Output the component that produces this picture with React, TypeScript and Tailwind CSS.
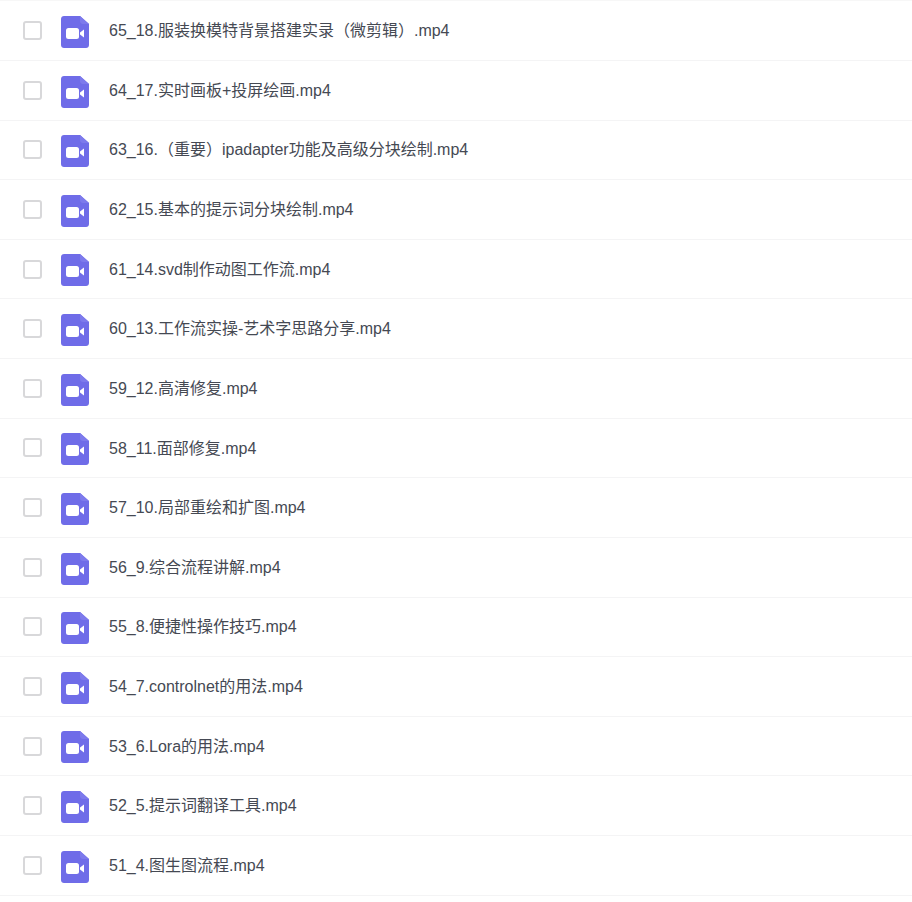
const files = [
  "65_18.服装换模特背景搭建实录（微剪辑）.mp4",
  "64_17.实时画板+投屏绘画.mp4",
  "63_16.（重要）ipadapter功能及高级分块绘制.mp4",
  "62_15.基本的提示词分块绘制.mp4",
  "61_14.svd制作动图工作流.mp4",
  "60_13.工作流实操-艺术字思路分享.mp4",
  "59_12.高清修复.mp4",
  "58_11.面部修复.mp4",
  "57_10.局部重绘和扩图.mp4",
  "56_9.综合流程讲解.mp4",
  "55_8.便捷性操作技巧.mp4",
  "54_7.controlnet的用法.mp4",
  "53_6.Lora的用法.mp4",
  "52_5.提示词翻译工具.mp4",
  "51_4.图生图流程.mp4",
];

function VideoFileIcon() {
  return (
    <svg width="28" height="32" viewBox="0 0 28 32" className="shrink-0">
      <path
        d="M3 0H19L28 8V29C28 30.7 26.7 32 25 32H3C1.3 32 0 30.7 0 29V3C0 1.3 1.3 0 3 0Z"
        fill="#6f6ce8"
      />
      <path d="M19 0L28 8H22C20.3 8 19 6.7 19 5V0Z" fill="#7d7aec" />
      <rect x="5" y="12" width="13" height="11" rx="2.5" fill="#fff" />
      <path d="M19 16.5L23 13.5V21.5L19 18.5Z" fill="#fff" />
    </svg>
  );
}

export default function App() {
  return (
    <div className="h-[902px] w-[912px] overflow-hidden bg-white pt-[0.3px] font-['Liberation_Sans','Noto_Sans_CJK_SC',sans-serif]">
      <div className="h-px bg-[#f7f7f7]" />
      {files.map((name) => (
        <div
          key={name}
          className="flex h-[59.64px] items-center border-b border-[#f4f4f5] pl-[23px]"
        >
          <div className="h-[19px] w-[19px] shrink-0 rounded-[3px] border-2 border-[#d8d8da] bg-white" />
          <div className="ml-[19px] mt-[2.6px]">
            <VideoFileIcon />
          </div>
          <span className="ml-[20px] mt-[1.1px] text-base text-[#454953]">{name}</span>
        </div>
      ))}
    </div>
  );
}
